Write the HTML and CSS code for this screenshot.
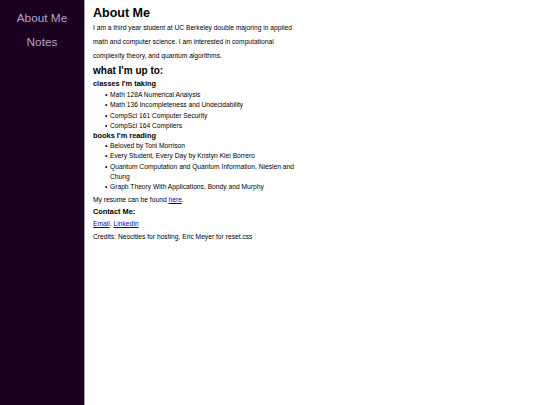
FILE: index.html
```html
<!DOCTYPE html>
<html lang="en">
<head>
<meta charset="utf-8">
<title>About Me</title>
<link rel="stylesheet" href="styles.css">
</head>
<body>
<div class="page">
  <nav class="sidebar">
    <a class="nav-link" href="#">About Me</a>
    <a class="nav-link" href="#">Notes</a>
  </nav>
  <main class="content">
    <h1 class="title">About Me</h1>
    <p class="intro">I am a third year student at UC Berkeley double majoring in applied math and computer science. I am interested in computational complexity theory, and quantum algorithms.</p>
    <h2 class="section">what I'm up to:</h2>
    <h3 class="sub sub-first">classes I'm taking</h3>
    <ul class="list">
      <li>Math 128A Numerical Analysis</li>
      <li>Math 136 Incompleteness and Undecidability</li>
      <li>CompSci 161 Computer Security</li>
      <li>CompSci 164 Compilers</li>
    </ul>
    <h3 class="sub">books I'm reading</h3>
    <ul class="list">
      <li>Beloved by Toni Morrison</li>
      <li>Every Student, Every Day by Kristyn Klei Borrero</li>
      <li>Quantum Computation and Quantum Information, Nieslen and Chung</li>
      <li>Graph Theory With Applications, Bondy and Murphy</li>
    </ul>
    <p class="line resume">My resume can be found <a href="#">here</a>.</p>
    <h3 class="sub contact">Contact Me:</h3>
    <p class="line links"><a href="#">Email</a>, <a href="#">LinkedIn</a></p>
    <p class="line credits">Credits: Neocities for hosting, Eric Meyer for reset.css</p>
  </main>
</div>
</body>
</html>
```
FILE: styles.css
```css
* { margin: 0; padding: 0; box-sizing: border-box; }
html, body { height: 100%; }
body {
  font-family: "Liberation Sans", Arial, sans-serif;
  color: #000;
  background: #fff;
}
.page {
  display: flex;
  min-height: 100vh;
}
.sidebar {
  width: 85px;
  flex: 0 0 85px;
  background: #1b0021;
  border-right: 1px solid #a99db3;
  display: flex;
  flex-direction: column;
  align-items: center;
  padding-top: 6px;
}
.nav-link {
  color: #b3a5c4;
  text-decoration: none;
  font-size: 11.8px;
  line-height: 24px;
}
.content {
  padding: 5px 0 0 8px;
  width: 215px;
  flex: 0 0 215px;
}
.content > * { width: 207px; }
.title {
  font-size: 12.5px;
  font-weight: bold;
  line-height: 16px;
}
.intro {
  font-size: 6.7px;
  line-height: 14px;
}
.section {
  font-size: 10px;
  font-weight: bold;
  line-height: 14px;
  margin-top: 1px;
}
.sub {
  font-size: 7.4px;
  font-weight: bold;
  line-height: 10px;
}
.sub-first { line-height: 12px; }
.list {
  list-style: none;
  padding-left: 12px;
  font-size: 6.7px;
  line-height: 10.3px;
}
.list li {
  display: flex;
}
.list li::before {
  content: "\2022";
  flex: 0 0 5px;
  width: 5px;
}
.line {
  font-size: 6.7px;
}
.resume { line-height: 13px; }
.contact { line-height: 11.5px; }
.links { line-height: 13px; }
.credits { line-height: 14px; }
.line a { color: #0000ee; text-decoration: underline; }
```
